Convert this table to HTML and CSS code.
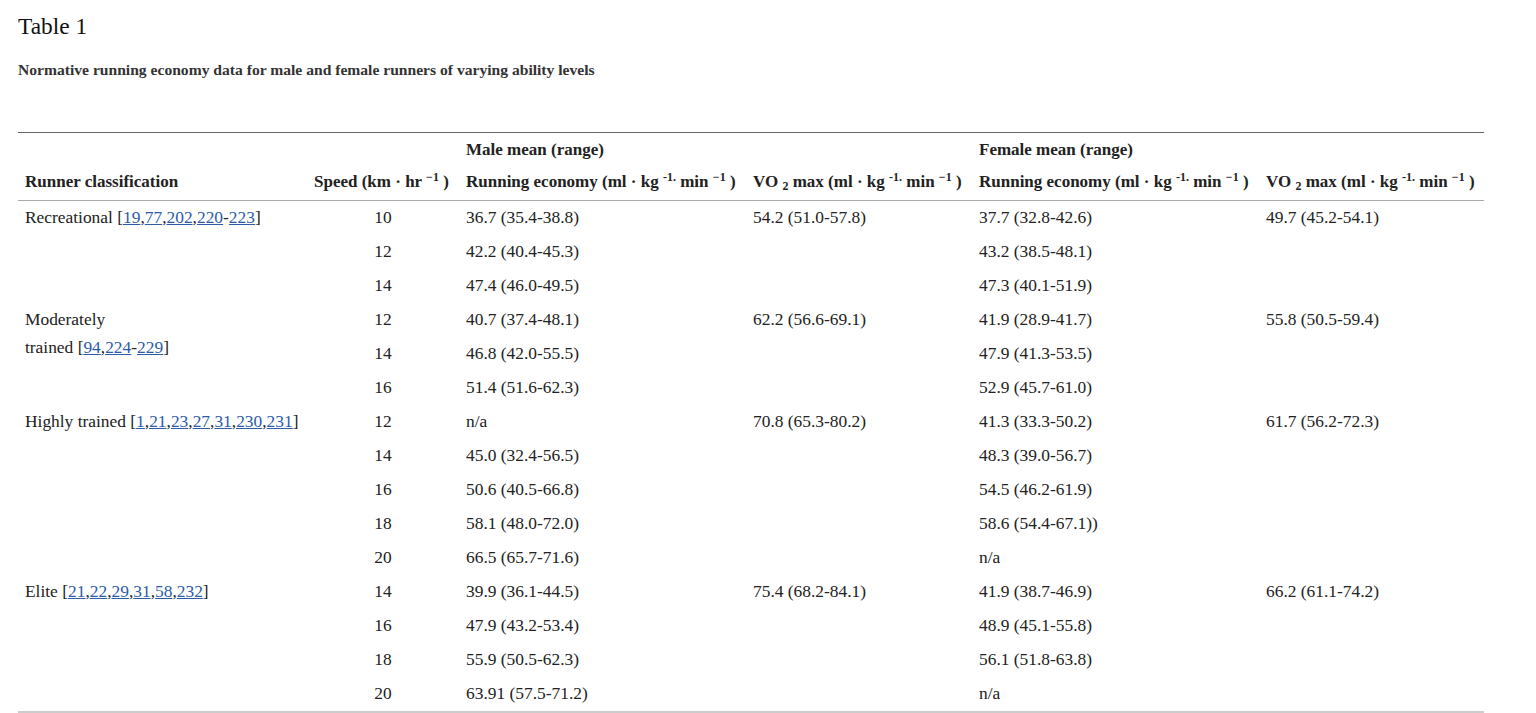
FILE: index.html
```html
<!DOCTYPE html>
<html lang="en">
<head>
<meta charset="utf-8">
<title>Table 1</title>
<link rel="stylesheet" href="styles.css">
</head>
<body>
<h3 class="title">Table 1</h3>
<div class="caption">Normative running economy data for male and female runners of varying ability levels</div>
<table class="data">
  <colgroup>
    <col class="c1"><col class="c2"><col class="c3"><col class="c4"><col class="c5"><col class="c6">
  </colgroup>
  <thead>
    <tr class="h1">
      <th></th><th></th>
      <th colspan="2">Male mean (range)</th>
      <th colspan="2">Female mean (range)</th>
    </tr>
    <tr class="h2">
      <th>Runner classification</th>
      <th>Speed (km · hr <sup>−1</sup> )</th>
      <th>Running economy (ml · kg <sup>-1.</sup> min <sup>−1</sup> )</th>
      <th>VO <sub>2</sub> max (ml · kg <sup>-1.</sup> min <sup>−1</sup> )</th>
      <th>Running economy (ml · kg <sup>-1.</sup> min <sup>−1</sup> )</th>
      <th>VO <sub>2</sub> max (ml · kg <sup>-1.</sup> min <sup>−1</sup> )</th>
    </tr>
  </thead>
  <tbody>
    <tr>
      <td rowspan="3">Recreational [<a href="#">19</a>,<a href="#">77</a>,<a href="#">202</a>,<a href="#">220</a>-<a href="#">223</a>]</td>
      <td class="sp">10</td><td>36.7 (35.4-38.8)</td><td rowspan="3">54.2 (51.0-57.8)</td><td>37.7 (32.8-42.6)</td><td rowspan="3">49.7 (45.2-54.1)</td>
    </tr>
    <tr><td class="sp">12</td><td>42.2 (40.4-45.3)</td><td>43.2 (38.5-48.1)</td></tr>
    <tr><td class="sp">14</td><td>47.4 (46.0-49.5)</td><td>47.3 (40.1-51.9)</td></tr>
    <tr>
      <td rowspan="3">Moderately<br>trained [<a href="#">94</a>,<a href="#">224</a>-<a href="#">229</a>]</td>
      <td class="sp">12</td><td>40.7 (37.4-48.1)</td><td rowspan="3">62.2 (56.6-69.1)</td><td>41.9 (28.9-41.7)</td><td rowspan="3">55.8 (50.5-59.4)</td>
    </tr>
    <tr><td class="sp">14</td><td>46.8 (42.0-55.5)</td><td>47.9 (41.3-53.5)</td></tr>
    <tr><td class="sp">16</td><td>51.4 (51.6-62.3)</td><td>52.9 (45.7-61.0)</td></tr>
    <tr>
      <td rowspan="5">Highly trained [<a href="#">1</a>,<a href="#">21</a>,<a href="#">23</a>,<a href="#">27</a>,<a href="#">31</a>,<a href="#">230</a>,<a href="#">231</a>]</td>
      <td class="sp">12</td><td>n/a</td><td rowspan="5">70.8 (65.3-80.2)</td><td>41.3 (33.3-50.2)</td><td rowspan="5">61.7 (56.2-72.3)</td>
    </tr>
    <tr><td class="sp">14</td><td>45.0 (32.4-56.5)</td><td>48.3 (39.0-56.7)</td></tr>
    <tr><td class="sp">16</td><td>50.6 (40.5-66.8)</td><td>54.5 (46.2-61.9)</td></tr>
    <tr><td class="sp">18</td><td>58.1 (48.0-72.0)</td><td>58.6 (54.4-67.1))</td></tr>
    <tr><td class="sp">20</td><td>66.5 (65.7-71.6)</td><td>n/a</td></tr>
    <tr>
      <td rowspan="4">Elite [<a href="#">21</a>,<a href="#">22</a>,<a href="#">29</a>,<a href="#">31</a>,<a href="#">58</a>,<a href="#">232</a>]</td>
      <td class="sp">14</td><td>39.9 (36.1-44.5)</td><td rowspan="4">75.4 (68.2-84.1)</td><td>41.9 (38.7-46.9)</td><td rowspan="4">66.2 (61.1-74.2)</td>
    </tr>
    <tr><td class="sp">16</td><td>47.9 (43.2-53.4)</td><td>48.9 (45.1-55.8)</td></tr>
    <tr><td class="sp">18</td><td>55.9 (50.5-62.3)</td><td>56.1 (51.8-63.8)</td></tr>
    <tr><td class="sp">20</td><td>63.91 (57.5-71.2)</td><td>n/a</td></tr>
  </tbody>
</table>
</body>
</html>
```

FILE: styles.css
```css
html, body {
  margin: 0;
  padding: 0;
  background: #fff;
}
body {
  padding: 0 18px;
  font-family: "Liberation Serif", "Times New Roman", serif;
  color: #222;
}
.title {
  margin: 0;
  padding-top: 12px;
  font-size: 23.4px;
  font-weight: normal;
  line-height: 28px;
  color: #111;
}
.caption {
  margin-top: 21px;
  font-size: 15.6px;
  font-weight: bold;
  line-height: 18px;
  color: #333;
}
.data {
  margin-top: 53px;
  width: 1466px;
  table-layout: fixed;
  border-collapse: collapse;
  font-size: 17.4px;
  border-top: 1px solid #666;
  border-bottom: 2px solid #ccc;
}
.c1 { width: 289px; }
.c2 { width: 152px; }
.c3 { width: 287px; }
.c4 { width: 226px; }
.c5 { width: 287px; }
.c6 { width: 225px; }
.data th, .data td {
  padding: 2px 7px 4px;
  line-height: 28px;
  text-align: left;
  vertical-align: top;
  white-space: nowrap;
}
.data th {
  font-size: 17px;
  font-weight: bold;
  color: #222;
}
.data tr.h1 th {
  padding-top: 3px;
  padding-bottom: 2px;
}
.data tr.h2 th {
  border-bottom: 1px solid #aaa;
}
.data td.sp {
  text-align: center;
}
sup, sub {
  font-size: 12px;
  line-height: 0;
}
sup { vertical-align: 6px; }
sub { vertical-align: -3px; }
a {
  color: #2c5ca8;
  text-decoration: underline;
}
```
